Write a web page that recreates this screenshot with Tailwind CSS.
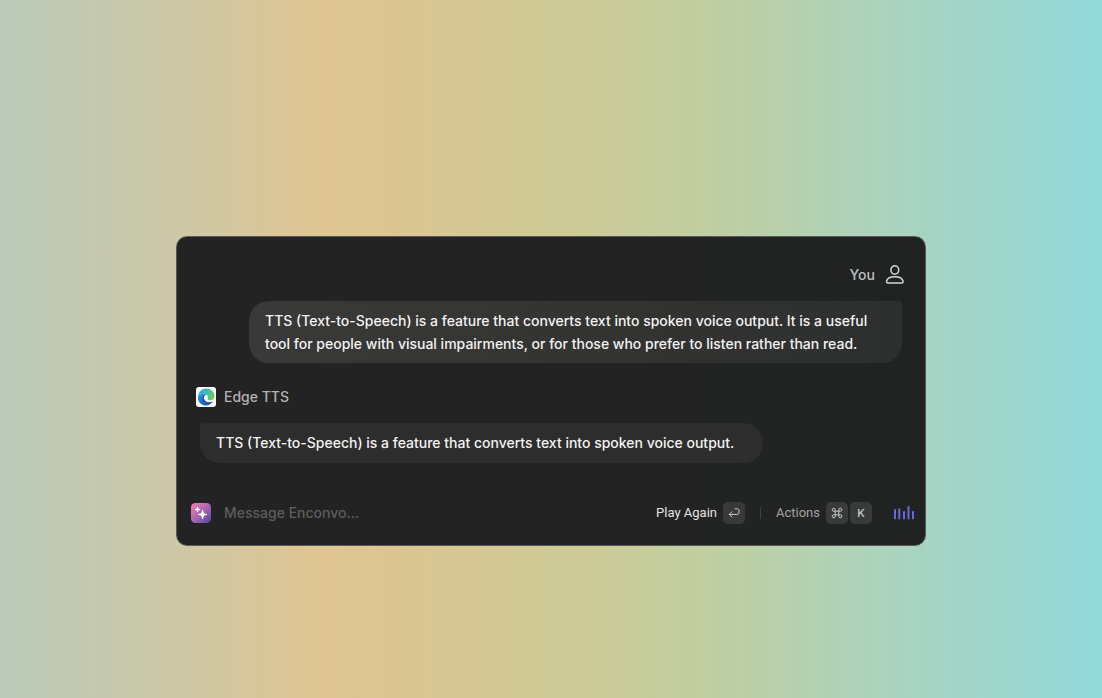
<!DOCTYPE html>
<html lang="en">
<head>
<meta charset="utf-8">
<meta name="viewport" content="width=device-width, initial-scale=1">
<title>Edge TTS</title>
<script src="https://cdn.jsdelivr.net/npm/@tailwindcss/browser@4"></script>
</head>
<body class="flex min-h-screen items-center justify-center bg-[linear-gradient(90deg,#bac9b9_0%,#cdc8a7_16%,#dfc591_29%,#dac693_37%,#cbcb98_54%,#bfcea1_65%,#aed2ba_78%,#9fd6cb_90%,#92d8db_100%)] pt-[84px] font-['Inter',sans-serif]">
<main class="flex w-full max-w-[750px] flex-col rounded-[11px] border border-[#5a5b59] bg-[linear-gradient(90deg,#232323_65%,#212323)] pt-6">
  <section class="flex flex-col items-end">
    <header class="flex h-7 items-center gap-2.5 pr-5 text-sm font-medium text-[#bdbdbd]">
      <h2>You</h2>
      <svg class="h-5 w-5" viewBox="0 0 20 20" fill="none" stroke="#d6d6d6" stroke-width="1.5" aria-hidden="true">
        <ellipse cx="9.8" cy="5" rx="3.9" ry="4.2"/>
        <path d="M3 18C1.8 18 1.3 17.4 1.5 16.5C2 13.8 5.2 11.7 9.8 11.7S17.6 13.8 18.1 16.5C18.3 17.4 17.8 18 16.6 18Z"/>
      </svg>
    </header>
    <p class="mt-3 mr-[23px] w-full max-w-[653px] rounded-[20px] rounded-tr-[4px] bg-linear-to-r from-[#393939] via-[#343432] to-[#2d2f2f] px-4 py-2 text-sm leading-[23px] font-medium text-[#f2f2f2]">TTS (Text-to-Speech) is a feature that converts text into spoken voice output. It is a useful tool for people with visual impairments, or for those who prefer to listen rather than read.</p>
  </section>
  <section class="mt-5 flex flex-col items-start pl-[19px]">
    <header class="flex h-7 items-center gap-2 text-sm font-medium text-[#b2b2b2]">
      <svg class="h-5 w-5" viewBox="0 0 20 20" aria-hidden="true">
        <defs>
          <linearGradient id="wave" x1="0" y1="0" x2="1" y2="0.4"><stop stop-color="#2da5df"/><stop offset=".5" stop-color="#36b9bd"/><stop offset="1" stop-color="#69cd62"/></linearGradient>
          <linearGradient id="sea" x1="0" y1="0" x2="1" y2="1"><stop stop-color="#2498dd"/><stop offset="1" stop-color="#1b51a1"/></linearGradient>
        </defs>
        <rect width="20" height="20" rx="3" fill="#fff"/>
        <path d="M2 9.5C2.6 4.7 5.8 1.5 10.2 1.5C15 1.5 18.6 5.2 18.6 9.1C18.6 11.9 16.5 13.3 14.2 13.3C12.2 13.3 11 12.6 11.4 11.8C12.4 10.6 12.1 9.4 11.3 8.4C9.3 5.9 4.4 6 2 9.5Z" fill="url(#wave)"/>
        <path d="M2 9.5C4.2 6.3 8.5 6 10.6 7.8C8.7 7.9 7.6 9.8 8 11.7C8.5 14.6 12 16.4 16.6 14.5C15 17.3 12.4 18.7 9.8 18.6C5.1 18.5 1.4 14.5 2 9.5Z" fill="url(#sea)"/>
        <path d="M8.3 8.9C7.4 10 7.7 12.2 9.1 13.7C10.8 15.5 13.8 15.8 16.5 14.5C14.4 17 11 17.7 8.5 16.2C5.2 14.2 5.3 10.2 8.3 8.9Z" fill="#2358ad"/>
      </svg>
      <h2>Edge TTS</h2>
    </header>
    <p class="mt-3 ml-1 w-full max-w-[563px] rounded-[20px] rounded-tl-[4px] bg-[#2d2d2d] px-4 py-2 text-sm leading-6 font-medium text-[#f2f2f2]">TTS (Text-to-Speech) is a feature that converts text into spoken voice output.</p>
  </section>
  <footer class="mt-[18px] flex h-16 items-center pr-2.5 pl-[14px]">
    <svg class="h-5 w-5 shrink-0" viewBox="0 0 20 20" aria-hidden="true">
      <defs><linearGradient id="spark" x1="0" y1="0" x2="1" y2="1"><stop stop-color="#f283a9"/><stop offset=".5" stop-color="#ad67b0"/><stop offset="1" stop-color="#4b44a0"/></linearGradient></defs>
      <rect width="20" height="20" rx="4.5" fill="url(#spark)"/>
      <path d="M6.5 4C6.8 5.9 7.1 6.2 9 6.5C7.1 6.8 6.8 7.1 6.5 9C6.2 7.1 5.9 6.8 4 6.5C5.9 6.2 6.2 5.9 6.5 4ZM11.6 7.2C12.1 10.4 12.7 11 15.9 11.5C12.7 12 12.1 12.6 11.6 15.8C11.1 12.6 10.5 12 7.3 11.5C10.5 11 11.1 10.4 11.6 7.2Z" fill="#fff" stroke="#fff" stroke-width=".9" stroke-linejoin="round"/>
    </svg>
    <input type="text" aria-label="Message" placeholder="Message Enconvo..." class="ml-[13px] min-w-0 flex-1 bg-transparent text-sm font-medium text-white outline-none placeholder:text-[#5d5d5d]">
    <button type="button" class="flex items-center gap-1.5 font-['Roboto',sans-serif] text-[13px] text-[#e2e2e2]">Play Again
      <kbd class="flex size-[22px] items-center justify-center rounded-[5px] bg-[#393939]">
        <svg class="h-3 w-3" viewBox="0 0 12 12" fill="none" stroke="#c9c9c9" stroke-width="1" stroke-linecap="round" stroke-linejoin="round" aria-label="Return"><path d="M7 1.8H9.3Q11 1.8 11 3.5V5.7Q11 7.4 9.3 7.4H1.3M4 4.7L1.3 7.4L4 10.1"/></svg>
      </kbd>
    </button>
    <span class="mx-[15px] h-3 w-px bg-[#404040]"></span>
    <button type="button" class="flex items-center font-['Roboto',sans-serif] text-[13px] text-[#a3a3a3]">Actions
      <kbd class="ml-1.5 flex size-[22px] items-center justify-center rounded-[5px] bg-[#393a3a]">
        <svg class="h-3 w-3" viewBox="0 0 12 12" fill="none" stroke="#c9c9c9" stroke-width="1" aria-label="Command"><path d="M4.2 4.2H7.8V7.8H4.2ZM4.2 4.2H2.8A1.5 1.5 0 1 1 4.2 2.8ZM7.8 4.2V2.8A1.5 1.5 0 1 1 9.2 4.2ZM7.8 7.8H9.2A1.5 1.5 0 1 1 7.8 9.2ZM4.2 7.8V9.2A1.5 1.5 0 1 1 2.8 7.8Z"/></svg>
      </kbd>
      <kbd class="ml-0.5 flex size-[22px] items-center justify-center rounded-[5px] bg-[#393a3a] font-['Inter',sans-serif] text-[11px] font-medium text-[#d0d0d0]">K</kbd>
    </button>
    <button type="button" aria-label="Voice" class="ml-[21px]">
      <svg class="h-4 w-[22px]" viewBox="0 0 22 16" fill="none" stroke="#6a66e0" stroke-width="2" aria-hidden="true"><path d="M2 4.3V14.3M6.3 3.6V14.3M11 6.3V14.3M15.5 1V14.3M20 6.3V14.3"/></svg>
    </button>
  </footer>
</main>
</body>
</html>
